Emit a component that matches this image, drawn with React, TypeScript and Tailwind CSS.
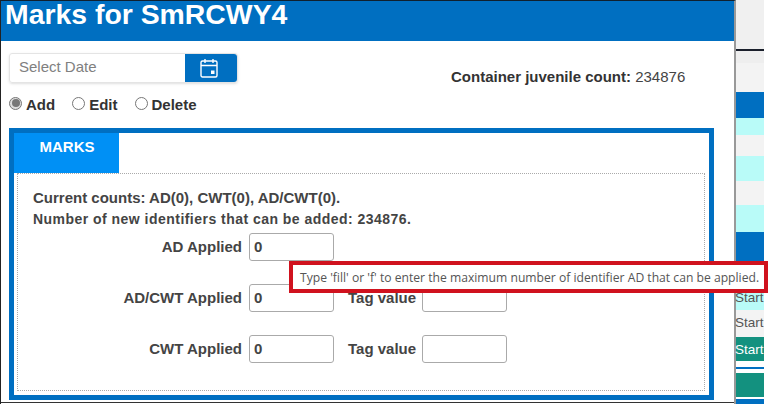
const strip = [
  { h: "h-[49px]", bg: "bg-[#f0f0f0]" },
  { h: "h-[2px]", bg: "bg-[#1a1f2b]" },
  { h: "h-[12px]", bg: "bg-[#eeeeee]" },
  { h: "h-[29px]", bg: "bg-[#f3f3f3]" },
  { h: "h-[26px]", bg: "bg-[#006fc1]" },
  { h: "h-[17px]", bg: "bg-[#b9fbf8]" },
  { h: "h-[21px]", bg: "bg-[#f3f3f3]" },
  { h: "h-[25px]", bg: "bg-[#b9fbf8]" },
  { h: "h-[24px]", bg: "bg-[#f3f3f3]" },
  { h: "h-[27px]", bg: "bg-[#b9fbf8]" },
  { h: "h-[30px]", bg: "bg-[#006fc1]" },
  { h: "h-[23px]", bg: "bg-[#f3f3f3]" },
];

function Radio({ label, checked }: { label: string; checked?: boolean }) {
  return (
    <label className="flex items-center gap-[4px]">
      <span className={"flex h-[13px] w-[13px] items-center justify-center rounded-full border border-[#777] -translate-y-[2px] " + (checked ? "bg-[#ddd]" : "bg-white")}>
        {checked && <span className="h-[8px] w-[8px] rounded-full bg-[#777]" />}
      </span>
      <span className="text-[15px] font-bold text-[#333]">{label}</span>
    </label>
  );
}

function Field({ label, value, tag }: { label: string; value: string; tag?: boolean }) {
  return (
    <div className="flex h-[28px] items-center">
      <span className="w-[232px] pr-[7px] text-right text-[15px] font-bold text-[#444]">{label}</span>
      <div className="flex h-[28px] w-[85px] items-center rounded-[3px] border border-[#aaa] bg-white pl-[4px] text-[15px] font-bold text-[#444]">{value}</div>
      {tag && (
        <>
          <span className="ml-[14px] w-[68px] whitespace-nowrap text-[15px] font-bold text-[#444]">Tag value</span>
          <div className="ml-[6px] h-[28px] w-[85px] rounded-[3px] border border-[#aaa] bg-white" />
        </>
      )}
    </div>
  );
}

export default function App() {
  return (
    <div className="relative flex h-[404px] w-[772px] overflow-hidden bg-white font-['Liberation_Sans',Arial,sans-serif]">
      <div className="flex h-[404px] w-[736px] shrink-0 flex-col border-t border-l border-r-2 border-t-[#10202e] border-l-[#222] border-r-[#999] bg-white">
        <div className="h-[40px] shrink-0 bg-[#006fc1] pl-[4px] text-[28.4px] leading-[27px] font-bold text-white">Marks for SmRCWY4</div>

        <div className="flex h-[87px] shrink-0 pt-[12px] pl-[8px]">
          <div className="flex w-[442px] flex-col">
            <div className="flex h-[30px] w-[229px] rounded-[3px] border border-[#e4e4e4] shadow-sm">
              <div className="flex flex-1 items-center pb-[2px] pl-[9px] text-[15px] text-[#808080]">Select Date</div>
              <div className="flex w-[52px] items-center justify-center rounded-r-[3px] bg-[#006fc1] pr-[5px]">
                <svg width="18" height="20" viewBox="0 0 18 20" fill="none" stroke="#ffffff" strokeWidth="1.4">
                  <rect x="1" y="3" width="16" height="16" rx="1.5" />
                  <path d="M1 7.5h16M5 1v4M13 1v4" />
                  <rect x="11" y="12.5" width="3.5" height="3.5" fill="#ffffff" stroke="none" />
                </svg>
              </div>
            </div>
            <div className="mt-[11px] flex gap-[17px]">
              <Radio label="Add" checked />
              <Radio label="Edit" />
              <Radio label="Delete" />
            </div>
          </div>
          <div className="mt-[13px] text-[15px] text-[#444]">
            <span className="font-bold text-[#333]">Container juvenile count:</span> 234876
          </div>
        </div>

        <div className="ml-[8px] flex h-[272px] w-[705px] shrink-0 flex-col border-[5px] border-[#006fc1] bg-white">
          <div className="h-[40px] w-[105px] shrink-0 bg-[#0090f5] pt-[3px] pl-[1px] text-center text-[15px] font-bold text-white">MARKS</div>
          <div className="ml-[3px] h-[218px] w-[688px] border border-dotted border-[#aaa] pt-[15px] pl-[15px]">
            <p className="text-[15px] leading-[18px] font-bold text-[#444]">Current counts: AD(0), CWT(0), AD/CWT(0).</p>
            <p className="mt-[3px] text-[14px] leading-[18px] font-bold tracking-[0.47px] text-[#444]">Number of new identifiers that can be added: 234876.</p>
            <div className="-ml-[16px] mt-[5px] flex flex-col gap-[23px]">
              <Field label="AD Applied" value="0" />
              <Field label="AD/CWT Applied" value="0" tag />
              <Field label="CWT Applied" value="0" tag />
            </div>
          </div>
        </div>

        <div className="mt-[2px] h-[1px] bg-[#333]" />
      </div>

      <div className="flex h-[404px] w-[28px] shrink-0 flex-col text-[13.5px] leading-[25px] whitespace-nowrap text-[#555]">
        {strip.map((s, i) => (
          <div key={i} className={"shrink-0 " + s.h + " " + s.bg} />
        ))}
        <div className="h-[25px] shrink-0 bg-[#b9fbf8]"><span className="-ml-[1px] block">Start</span></div>
        <div className="h-[27px] shrink-0 bg-[#f3f3f3]"><span className="-ml-[1px] block">Start</span></div>
        <div className="h-[24px] shrink-0 bg-[#13917f] text-white"><span className="-ml-[1px] block">Start</span></div>
        <div className="mt-[6px] h-[2px] shrink-0 bg-[#006fc1]" />
        <div className="mt-[4px] h-[24px] shrink-0 bg-[#13917f]" />
        <div className="mt-[2px] h-[5px] shrink-0 bg-[#006fc1]" />
      </div>

      <div className="absolute top-[261px] left-[289px] flex h-[32px] w-[479px] items-center whitespace-nowrap border-[4px] border-[#d0121e] bg-white pt-[3px] pl-[7px] font-['Open_Sans',sans-serif] text-[12.15px] text-[#555]">
        Type 'fill' or 'f' to enter the maximum number of identifier AD that can be applied.
      </div>
    </div>
  );
}
